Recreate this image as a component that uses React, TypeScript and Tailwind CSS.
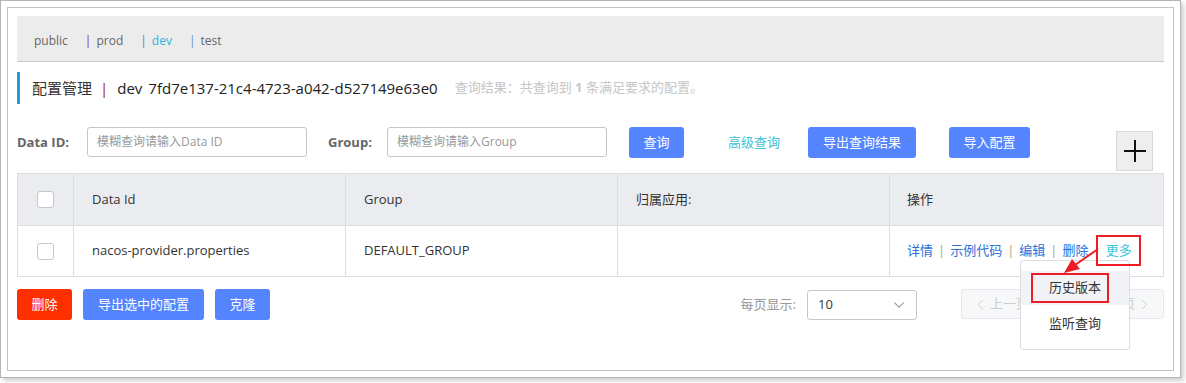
import { ChevronDown, ChevronLeft, ChevronRight } from 'lucide-react';

const tabs = [
  { name: 'prod', bar: 'text-[#8a2a8a]', text: 'text-[#666666]' },
  { name: 'dev', bar: 'text-[#5b7fc0]', text: 'text-[#28b3e0]' },
  { name: 'test', bar: 'text-[#5f95c8]', text: 'text-[#666666]' },
];

const actions = ['详情', '示例代码', '编辑', '删除'];

function Checkbox() {
  return <div className="w-[17px] h-[17px] rounded-[3px] border border-[#c4c6cf] bg-white" />;
}

export default function App() {
  return (
    <div className="relative w-[1186px] h-[383px] bg-white font-['Open_Sans','Noto_Sans_CJK_SC',sans-serif] text-[#333333]">
      {/* screenshot frame */}
      <div className="w-[1181px] h-[378px] border border-[#b4b4b4] bg-white p-[6px] shadow-[3px_3px_4px_rgba(0,0,0,0.18)]">
        <div className="h-full border border-[#c2c2c2] px-[9px] pt-[8px]">
          {/* namespace tabs */}
          <div className="h-[46px] bg-[#ececec] border-b border-[#c9c9c9] flex items-center pl-[17px] pt-[5px] text-[12px]">
            <span className="text-[#666666]">public</span>
            {tabs.map((t) => (
              <span key={t.name} className="ml-[17px] flex items-center">
                <span className={t.bar}>|</span>
                <span className={`ml-[5px] ${t.text}`}>{t.name}</span>
              </span>
            ))}
          </div>

          {/* title */}
          <div className="mt-[10px] h-[32px] border-l-[3px] border-[#1d9dd7] flex items-center pl-[12px]">
            <span className="text-[15px] text-[#333333]">配置管理</span>
            <span className="ml-[8px] text-[15px] text-[#a01818]">|</span>
            <span className="ml-[9px] text-[15px] text-[#222222]">dev</span>
            <span className="ml-[6px] text-[15px] text-[#222222]">7fd7e137-21c4-4723-a042-d527149e63e0</span>
            <span className="ml-[17px] text-[13px] text-[#c6c6c6]">
              查询结果：共查询到 <b className="font-bold">1</b> 条满足要求的配置。
            </span>
          </div>

          {/* search row */}
          <div className="mt-[23px] flex items-start text-[13px]">
            <span className="w-[70px] leading-[30px] font-bold text-[#666666]">Data ID:</span>
            <div className="w-[220px] h-[30px] border border-[#c4c6cf] rounded-[3px] px-[9px] flex items-center text-[12px] text-[#999999]">
              模糊查询请输入Data ID
            </div>
            <span className="ml-[21px] w-[59px] leading-[30px] font-bold text-[#666666]">Group:</span>
            <div className="w-[220px] h-[30px] border border-[#c4c6cf] rounded-[3px] px-[9px] flex items-center text-[12px] text-[#999999]">
              模糊查询请输入Group
            </div>
            <button className="ml-[22px] w-[55px] h-[31px] rounded-[3px] bg-[#5584ff] text-white">查询</button>
            <span className="ml-[44px] leading-[31px] text-[#3ec3d8]">高级查询</span>
            <button className="ml-[28px] w-[108px] h-[31px] rounded-[3px] bg-[#5584ff] text-white">导出查询结果</button>
            <button className="ml-[33px] w-[81px] h-[31px] rounded-[3px] bg-[#5584ff] text-white">导入配置</button>
            <div className="ml-auto mr-[11px] mt-[4px] w-[37px] h-[40px] bg-[#eeeeee] border border-[#d9d9d9] flex items-center justify-center">
              <svg width="24" height="24" viewBox="0 0 24 24">
                <path d="M1 12H23M12 1V23" stroke="#111" strokeWidth="2" />
              </svg>
            </div>
          </div>

          {/* table */}
          <div className="mt-[2px] border border-[#dcdee3] text-[13px]">
            <div className="grid grid-cols-[56px_272px_272px_272px_1fr] h-[52px] bg-[#ebecf0] border-b border-[#dcdee3]">
              <div className="flex items-center justify-center border-r border-[#dcdee3]">
                <Checkbox />
              </div>
              <div className="flex items-center pl-[18px] border-r border-[#dcdee3]">Data Id</div>
              <div className="flex items-center pl-[18px] border-r border-[#dcdee3]">Group</div>
              <div className="flex items-center pl-[18px] border-r border-[#dcdee3]">归属应用:</div>
              <div className="flex items-center pl-[17px]">操作</div>
            </div>
            <div className="grid grid-cols-[56px_272px_272px_272px_1fr] h-[50px]">
              <div className="flex items-center justify-center border-r border-[#dcdee3]">
                <Checkbox />
              </div>
              <div className="flex items-center pl-[18px] border-r border-[#dcdee3]">nacos-provider.properties</div>
              <div className="flex items-center pl-[18px] border-r border-[#dcdee3]">DEFAULT_GROUP</div>
              <div className="border-r border-[#dcdee3]" />
              <div className="flex items-center pl-[17px]">
                {actions.map((a) => (
                  <span key={a} className="flex items-center">
                    <span className="text-[#2a6fd8]">{a}</span>
                    <span className="mx-[5px] text-[#b59a78]">|</span>
                  </span>
                ))}
                <span className="text-[#3ec3d8]">更多</span>
              </div>
            </div>
          </div>

          {/* footer */}
          <div className="mt-[12px] flex items-start text-[13px]">
            <button className="w-[55px] h-[31px] rounded-[3px] bg-[#ff3000] text-white">删除</button>
            <button className="ml-[11px] w-[121px] h-[31px] rounded-[3px] bg-[#5584ff] text-white">导出选中的配置</button>
            <button className="ml-[11px] w-[55px] h-[31px] rounded-[3px] bg-[#5584ff] text-white">克隆</button>
            <span className="ml-auto leading-[31px] text-[#999999]">每页显示:</span>
            <div className="ml-[11px] mt-[1px] w-[110px] h-[30px] border border-[#c4c6cf] rounded-[3px] flex items-center justify-between pl-[10px] pr-[8px]">
              <span className="text-[#333333]">10</span>
              <ChevronDown size={18} strokeWidth={1.4} color="#888888" />
            </div>
            <div className="ml-[44px] w-[203px] h-[30px] border border-[#e6e7eb] bg-[#f7f8fa] rounded-[3px] flex items-center justify-between px-[10px] text-[#cccccc]">
              <span className="flex items-center gap-[1px]">
                <ChevronLeft size={17} strokeWidth={1.3} />
                上一页
              </span>
              <span className="flex items-center gap-[1px]">
                下一页
                <ChevronRight size={17} strokeWidth={1.3} />
              </span>
            </div>
          </div>
        </div>
      </div>

      {/* "更多" dropdown */}
      <div className="absolute left-[1020px] top-[260px] w-[110px] h-[90px] bg-white border border-[#dcdee3] rounded-[3px] pt-[10px] text-[13px]">
        <div className="h-[34px] bg-[#f2f3f7] flex items-center justify-center">历史版本</div>
        <div className="h-[38px] flex items-center justify-center">监听查询</div>
      </div>

      {/* annotations */}
      <div className="absolute left-[1096px] top-[235px] w-[45px] h-[31px] border-2 border-[#ee1c25]" />
      <div className="absolute left-[1031px] top-[273px] w-[78px] h-[30px] border-2 border-[#ee1c25]" />
      <svg className="absolute left-0 top-0" width="1186" height="383">
        <line x1="1098" y1="249" x2="1075" y2="265" stroke="#ee1c25" strokeWidth="2" />
        <polygon points="1064,273 1072,259 1080,269" fill="#ee1c25" />
      </svg>
    </div>
  );
}
